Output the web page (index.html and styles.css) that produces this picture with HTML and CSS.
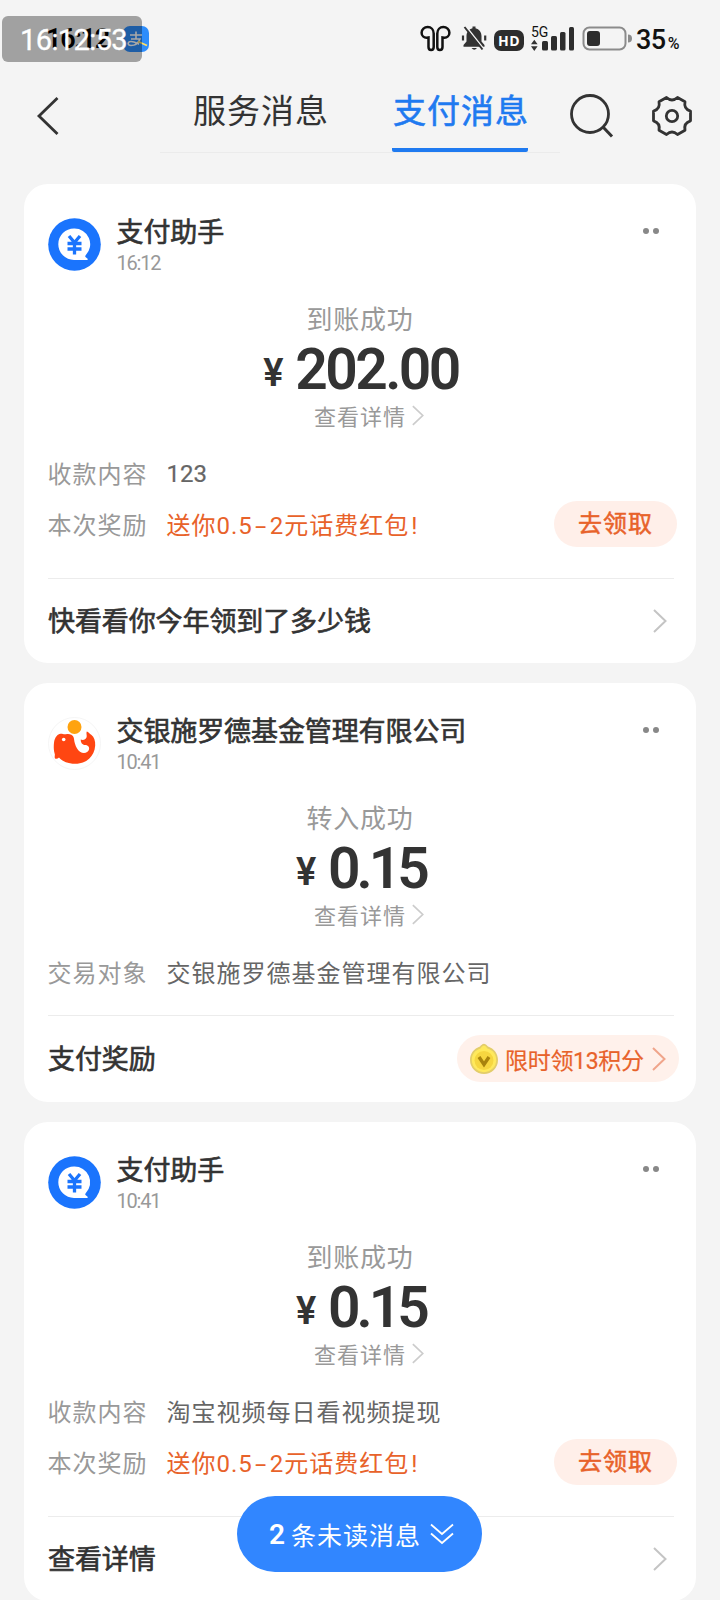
FILE: index.html
```html
<!DOCTYPE html>
<html lang="zh-CN">
<head>
<meta charset="utf-8">
<title>支付消息</title>
<link rel="stylesheet" href="styles.css">
</head>
<body>
<svg class="defs" width="0" height="0">
  <symbol id="avatar-pay" viewBox="0 0 53 53">
    <circle cx="26.5" cy="26.5" r="26.3" fill="#1a74fd"/>
    <path d="M26 10.500a15.700 15.700 0 1 0 0 31.400h13c1.200 0 1-1.300 0-1.700l-1.500-1.200c-.5-.6-.3-1.200.2-1.800A15.700 15.700 0 0 0 26 10.500z" fill="#fff"/>
    <path d="M21 18l5.500 6.500L32 18M19.500 25.500h14M19.500 31h14M26.500 24.500v12" fill="none" stroke="#1a74fd" stroke-width="3.300"/>
  </symbol>
  <symbol id="avatar-fund" viewBox="0 0 53 53">
    <circle cx="26.500" cy="26.500" r="26" fill="#fff" stroke="#f5f5f5"/>
    <path d="M7 41.500C6 40 7.500 38 6.500 36C5.500 33 5.500 27 6.500 23C7.500 20 9.500 17 12.500 16.700C14.500 16.500 16 17.800 18 17.200C21 16.500 24.500 17.500 25.500 20C26.300 22 26 24 27 26.700C28 30 29.500 33 32 34.700C35.500 37 40 36 41 32.500C41.700 29.500 39.500 28 37 28C34.500 28 32.500 25.500 32.800 22.500C35 23.500 38.500 22.500 38.700 19.500C38.900 17.500 38 16.500 38.800 14.500C40.500 15 41.500 17 43.500 18C46 20 47.500 24 47.200 28.500C46.500 39.500 38.500 46.800 27 46.800C20.500 46.800 14.500 44.500 11 40.500C9.700 41.700 8.300 42.300 7 41.500z" fill="#ff4612"/>
    <circle cx="26.500" cy="10" r="7" fill="#ffa30f"/>
    <circle cx="15.700" cy="22.500" r="1.800" fill="#fff"/>
  </symbol>
  <symbol id="chev" viewBox="0 0 14 24"><path d="M1 1l11.500 11L1 23" fill="none" stroke="currentColor" stroke-width="2"/></symbol>
</svg>

<div class="screen">
  <header class="statusbar">
    <span class="clock">16:12</span>
    <svg class="alipay" viewBox="0 0 26 26"><rect width="26" height="26" rx="7" fill="#2e8dfb"/><path d="M7 9h12M13 5.500v7.500M8 13h9c-2 5-6 6.500-9 6.500-4 0-3.500-4 0-4 4 0 6 2 8 2.700" fill="none" stroke="#fff" stroke-width="1.600"/><path d="M15 15.500l9 4" stroke="#ffe067" stroke-width="1.800"/></svg>
    <span class="timestamp">16:12:53</span>
    <svg class="sysicons" viewBox="0 0 214 30">
      <g fill="none" stroke="#111" stroke-width="2.500">
        <path d="M8.500 12.500v9.500q0 3 2.600 3t2.600-3V8.500c0-4-2.700-6.500-6-6.500S1.600 4.500 1.600 7.700s2.500 5 4.900 5c1.200 0 2-.2 2-.2z"/>
        <path d="M22.500 12.500v9.500q0 3-2.600 3t-2.600-3V8.500c0-4 2.700-6.500 6-6.500s6.100 2.500 6.100 5.700-2.500 5-4.900 5c-1.200 0-2-.2-2-.2z"/>
      </g>
      <path d="M52.500 1.500h3v1.700c3.800 1 6 4 6 7.800v5.500l3 3.500v1.800H43.500V20l3-3.500V11c0-3.800 2.200-6.800 6-7.800zM51.500 23h5.500q-2.700 3.500-5.500 0z" fill="#333"/>
      <path d="M46.500 2L63 23" stroke="#f4f4f4" stroke-width="1.600"/><path d="M44.500 2l18 22.500" stroke="#333" stroke-width="2"/>
      <path d="M43 10.500v5M65.200 10.500v5" stroke="#333" stroke-width="2.200"/>
      <rect x="74" y="5" width="30" height="21" rx="7" fill="#2d2d2d"/>
      <text x="89" y="20.700" text-anchor="middle" class="hd">HD</text>
      <text x="111" y="12" class="net">5G</text>
      <path d="M111 19.300l3.300-4.600 3.300 4.600zM111 21.300l3.300 4.600 3.300-4.600z" fill="#333"/>
      <g fill="#2d2d2d"><rect x="122" y="16" width="6" height="9.500" rx="1.500"/><rect x="131" y="11" width="6" height="14.500" rx="1.500"/><rect x="140" y="7" width="5.500" height="18.500" rx="1.500"/><rect x="149" y="2" width="5" height="23.500" rx="1.500"/></g>
      <rect x="163.500" y="2.500" width="42" height="22" rx="6" fill="none" stroke="#8b8b8b" stroke-width="2"/>
      <rect x="167" y="6" width="13" height="15" rx="3" fill="#2d2d2d"/>
      <path d="M208 9.500q4 0 4 4t-4 4z" fill="#8b8b8b"/>
    </svg>
    <span class="battery">35<small>%</small></span>
  </header>

  <nav class="navbar">
    <svg class="back" viewBox="0 0 24 38"><path d="M21.500 1L3 19l18.500 18" fill="none" stroke="#333" stroke-width="2.800"/></svg>
    <div class="tabs"><span class="tab">服务消息</span><span class="tab active">支付消息</span></div>
    <svg class="search" viewBox="0 0 44 44"><circle cx="20" cy="20" r="18.500" fill="none" stroke="#333" stroke-width="2.800"/><path d="M33.500 33.500l8.500 9" stroke="#333" stroke-width="3"/></svg>
    <svg class="gear" viewBox="0 0 42 42"><g fill="none" stroke="#333" stroke-width="2.800" stroke-linejoin="round"><path d="M15.500 2.500Q21 7.500 26.500 2.500L34 6.800Q32.500 14 39.500 16.200V25.800Q32.500 28 34 35.200L26.500 39.500Q21 34.500 15.500 39.500L8 35.200Q9.500 28 2.500 25.800V16.200Q9.500 14 8 6.800Z"/><circle cx="21" cy="21" r="5.700"/></g></svg>
  </nav>

  <main class="feed">
    <article class="card">
      <div class="head"><svg class="avatar"><use href="#avatar-pay"/></svg><div class="who"><h2>支付助手</h2><time>16:12</time></div><div class="more"><i></i><i></i></div></div>
      <div class="state">到账成功</div>
      <div class="amount"><span class="yen">¥</span><span class="figure">202.00</span></div>
      <div class="detail">查看详情<svg><use href="#chev"/></svg></div>
      <div class="rows">
        <div class="row"><span class="key">收款内容</span><span class="val num">123</span></div>
        <div class="row"><span class="key">本次奖励</span><span class="val promo">送你0.5<span class="dash">-</span>2元话费红包<span class="bang">!</span></span><span class="claim">去领取</span></div>
      </div>
      <div class="foot"><span>快看看你今年领到了多少钱</span><svg class="go"><use href="#chev"/></svg></div>
    </article>

    <article class="card compact">
      <div class="head"><svg class="avatar"><use href="#avatar-fund"/></svg><div class="who"><h2>交银施罗德基金管理有限公司</h2><time>10:41</time></div><div class="more"><i></i><i></i></div></div>
      <div class="state">转入成功</div>
      <div class="amount"><span class="yen">¥</span><span class="figure small">0.15</span></div>
      <div class="detail">查看详情<svg><use href="#chev"/></svg></div>
      <div class="rows">
        <div class="row"><span class="key">交易对象</span><span class="val">交银施罗德基金管理有限公司</span></div>
      </div>
      <div class="foot"><span>支付奖励</span>
        <div class="points">
          <svg class="coin" viewBox="0 0 30 32"><path d="M15 .8q2 0 4 2.700c6 2 10 7 10 13.500A14 14 0 0 1 1 17C1 10.500 5 5.500 11 3.500 13 .8 15 .8 15 .8z" fill="#e3cd6a"/><path d="M15 2.500q1.500 0 3.500 3c5.500 1.500 8.700 6 8.700 11.500a12.200 12.200 0 0 1-24.400 0c0-5.500 3.200-10 8.700-11.500 2-3 3.500-3 3.500-3z" fill="#ffe95c"/><circle cx="15" cy="17.500" r="9.500" fill="#f6d640"/><path d="M10 14l5 7.500L20 14" fill="none" stroke="#a8830d" stroke-width="3.400"/></svg>
          <span>限时领13积分</span><svg class="arrow"><use href="#chev"/></svg>
        </div>
      </div>
    </article>

    <article class="card">
      <div class="head"><svg class="avatar"><use href="#avatar-pay"/></svg><div class="who"><h2>支付助手</h2><time>10:41</time></div><div class="more"><i></i><i></i></div></div>
      <div class="state">到账成功</div>
      <div class="amount"><span class="yen">¥</span><span class="figure small">0.15</span></div>
      <div class="detail">查看详情<svg><use href="#chev"/></svg></div>
      <div class="rows">
        <div class="row"><span class="key">收款内容</span><span class="val">淘宝视频每日看视频提现</span></div>
        <div class="row"><span class="key">本次奖励</span><span class="val promo">送你0.5<span class="dash">-</span>2元话费红包<span class="bang">!</span></span><span class="claim">去领取</span></div>
      </div>
      <div class="foot"><span>查看详情</span><svg class="go"><use href="#chev"/></svg></div>
    </article>
  </main>

  <div class="unread"><b>2</b><span>条未读消息</span><svg viewBox="0 0 24 22"><path d="M1 1.500l11 9.500 11-9.500M1 10.500L12 20l11-9.500" fill="none" stroke="#fff" stroke-width="1.800"/></svg></div>
</div>
</body>
</html>
```
FILE: styles.css
```css
* { box-sizing: border-box; }
body {
  margin: 0;
  background: #f4f4f4;
  font-family: Roboto, "Noto Sans CJK SC", sans-serif;
  color: #333;
}
.defs { position: absolute; }
.screen { position: relative; width: 720px; height: 1600px; overflow: hidden; white-space: nowrap; }
svg { display: block; flex: none; }

.statusbar { position: relative; height: 76px; }
.clock { position: absolute; left: 46px; top: 22px; font-size: 27px; line-height: 34px; font-weight: 600; letter-spacing: -1.200px; color: #000; }
.alipay { position: absolute; left: 123px; top: 26px; width: 26px; height: 26px; }
.timestamp {
  position: absolute; left: 2px; top: 16px; width: 140px; height: 46px;
  padding-left: 18px; border-radius: 6px; background: rgba(0, 0, 0, .34);
  color: #fff; font-size: 29px; line-height: 48px; letter-spacing: -.6px; -webkit-text-stroke: .3px;
}
.sysicons { position: absolute; left: 420px; top: 25px; width: 214px; height: 30px; }
.hd { font: 700 14px "Open Sans", sans-serif; fill: #fff; letter-spacing: .5px; }
.net { font: 14px Roboto, sans-serif; fill: #111; }
.battery { position: absolute; left: 636px; top: 23px; font-size: 27px; line-height: 34px; font-weight: 500; color: #111; letter-spacing: -.5px; }
.battery small { font-size: 16px; margin-left: 2px; }

.navbar { display: flex; height: 108px; padding-left: 36px; align-items: flex-start; }
.back { width: 24px; height: 38px; margin-top: 21px; }
.tabs { display: flex; gap: 64px; width: 400px; height: 77px; margin-left: 100px; padding-left: 32px; border-bottom: 1px solid #ebebeb; }
.tab { width: 136px; height: 76px; padding-left: 1px; font-size: 33px; line-height: 71px; letter-spacing: 1px; text-align: center; }
.tab.active { border-bottom: 4px solid #1f7af0; border-radius: 2px; color: #1f7af0; -webkit-text-stroke: .6px; }
.search { width: 44px; height: 44px; margin: 18px 0 0 10px; }
.gear { width: 42px; height: 42px; margin: 19px 0 0 37px; }

.feed { display: flex; flex-direction: column; gap: 20px; padding: 0 24px; }
.card { height: 479px; padding: 0 22px 0 24px; border-radius: 24px; background: #fff; flex: none; }
.card.compact { height: 419px; }
.head { display: flex; height: 118px; padding-top: 34px; }
.avatar { width: 53px; height: 53px; margin-left: -.5px; }
.who { flex: 1; margin: -2px 0 0 16px; }
.who h2 { margin: 0; font-size: 27px; line-height: 34px; font-weight: 400; letter-spacing: -.1px; -webkit-text-stroke: .65px; }
.who time { display: block; font-size: 20px; line-height: 26px; letter-spacing: -1.200px; color: #999; }
.more { display: flex; gap: 4px; margin: 10px 15px 0 0; }
.more i { width: 6px; height: 6px; border-radius: 50%; background: #888; }
.state { height: 36px; padding-right: 2px; font-size: 26px; line-height: 37px; letter-spacing: .8px; text-align: center; color: #999; }
.amount { display: flex; justify-content: center; height: 61px; font-size: 57px; line-height: 64px; font-weight: 600; }
.figure { letter-spacing: -2.600px; }
.figure.small { letter-spacing: -4px; }
.yen { width: 32px; font-size: 38px; line-height: 70px; }
.detail { display: flex; justify-content: center; align-items: center; gap: 6px; height: 32px; padding-left: 16px; font-size: 22px; letter-spacing: 1px; color: #999; }
.detail svg { width: 12px; height: 21px; margin-top: 1px; color: #ccc; }
.rows { padding-top: 16px; height: 147px; }
.compact .rows { height: 85px; }
.row { display: flex; align-items: center; height: 51px; font-size: 24px; letter-spacing: 1px; }
.key { width: 119px; margin-left: -.5px; color: #999; }
.val { flex: 1; color: #666; }
.num { padding-top: 2px; letter-spacing: 0; -webkit-text-stroke: .2px; }
.promo, .claim, .points { color: #e8622a; }
.promo { letter-spacing: 1px; }
.dash { display: inline-block; width: 17px; text-align: center; transform: scaleX(1.700); }
.bang { margin-left: 2px; }
.claim { width: 123px; height: 46px; margin-right: -3px; border-radius: 23px; background: #ffefe9; text-align: center; line-height: 47px; -webkit-text-stroke: .5px; }
.foot { display: flex; justify-content: space-between; align-items: center; height: 85px; border-top: 1px solid #ececec; font-size: 27px; letter-spacing: -.1px; -webkit-text-stroke: .65px; }
.foot > span { margin-top: -4px; }
.compact .foot { height: 87px; }
.go { width: 14px; height: 24px; margin-right: 7px; color: #c4c4c4; }
.points { display: flex; align-items: center; width: 222px; height: 47px; margin: -1px -5px 0 0; padding-left: 12px; border-radius: 24px; background: #fff1eb; font-size: 23px; letter-spacing: -.3px; -webkit-text-stroke: .2px; }
.coin { width: 30px; height: 32px; margin-right: 6px; }
.arrow { width: 14px; height: 24px; margin-left: 8px; color: #f0a58b; }

.unread {
  position: absolute; left: 237px; top: 1496px; width: 245px; height: 76px;
  display: flex; align-items: center; padding-left: 32px; border-radius: 38px;
  background: #3186ff; color: #fff; font-size: 25px; letter-spacing: 1px;
}
.unread b { width: 22px; font-size: 28px; font-weight: 600; }
.unread svg { width: 24px; height: 22px; margin-left: 9px; }
```
